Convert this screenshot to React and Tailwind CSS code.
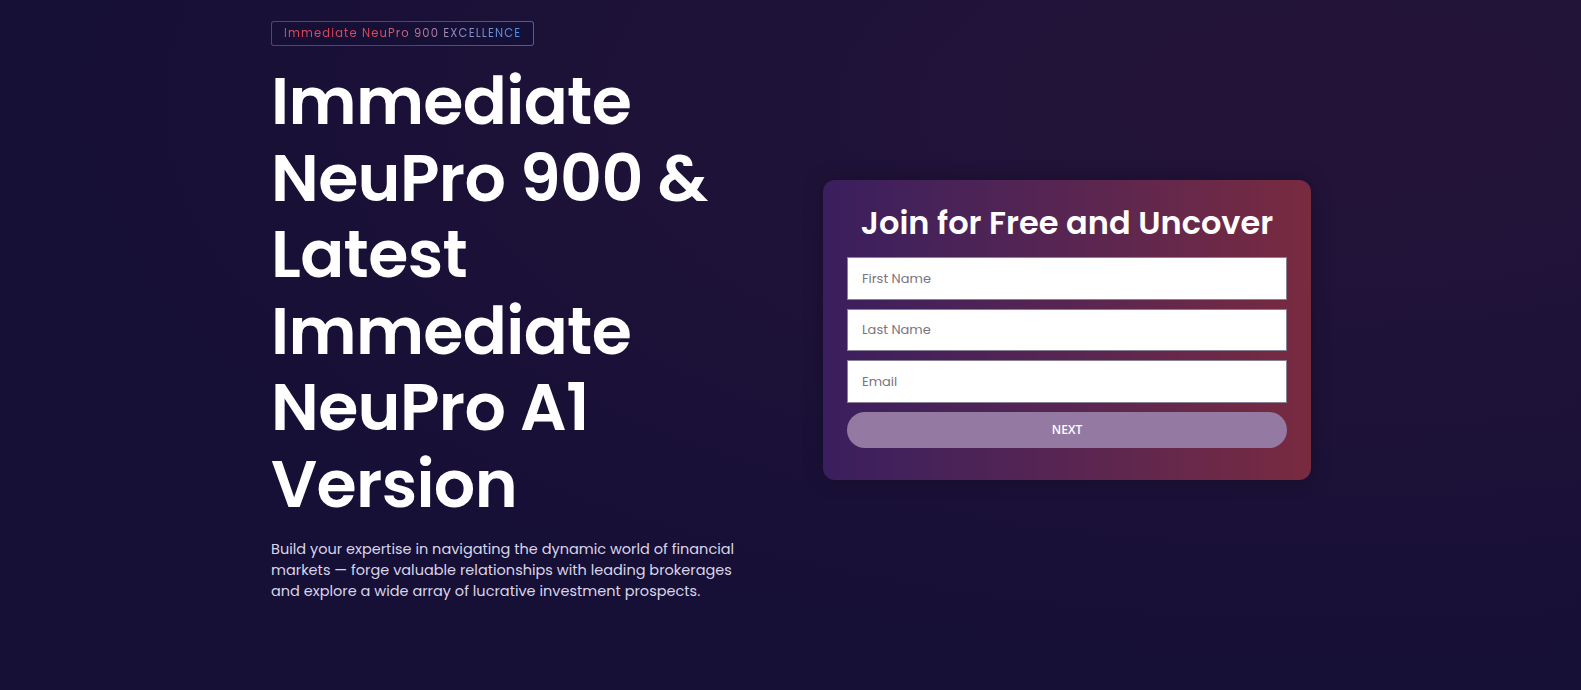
import React from "react";

export default function App() {
  return (
    <div
      className="min-h-screen w-full overflow-hidden bg-[#150f37] bg-[radial-gradient(ellipse_at_85%_15%,#241339_0%,#1e1238_35%,#160f36_70%)]"
      style={{ fontFamily: "Poppins, Inter, 'Noto Sans', sans-serif" }}
    >
      <div className="flex items-center pl-[271px] pt-[20px] pb-[90px]">
        <div className="w-[484px] shrink-0">
          <div className="inline-flex rounded-[3px] bg-gradient-to-r from-[#6a3a72] via-[#4c3f8c] to-[#3e62b0] p-px">
            <div className="flex h-[23px] items-center rounded-[2px] bg-[#161037] px-[12px] text-[11.5px] tracking-[0.1em]">
              <span className="bg-gradient-to-r from-[#dc4a5a] from-40% via-[#9c8db8] via-70% to-[#4a8ee8] bg-clip-text text-transparent">
                Immediate NeuPro 900 EXCELLENCE
              </span>
            </div>
          </div>
          <h1 className="mt-[18px] text-[65px] font-semibold leading-[76.5px] tracking-[-0.01em] text-white">
            Immediate NeuPro 900 &amp; Latest Immediate NeuPro A1 Version
          </h1>
          <p className="mt-[16px] w-[472px] text-[14.5px] leading-[21px] text-[#d9d5e8]">
            Build your expertise in navigating the dynamic world of financial markets — forge valuable relationships with leading brokerages and explore a wide array of lucrative investment prospects.
          </p>
        </div>

        <div className="mt-[38px] ml-[68px] w-[488px] shrink-0 rounded-[12px] bg-gradient-to-r from-[#3a1e5e] via-[#582552] to-[#792a3f] px-[24px] pt-[22px] pb-[32px] shadow-[0_0_20px_rgba(0,0,0,0.25)]">
          <h2 className="text-center text-[32px] font-semibold leading-[42px] text-white">
            Join for Free and Uncover
          </h2>
          <form className="mt-[13px] flex flex-col gap-[9px]" onSubmit={(e) => e.preventDefault()}>
            <input
              type="text"
              placeholder="First Name"
              className="h-[42.5px] w-full border border-[#8b8196] bg-white px-[14px] text-[13px] text-gray-800 placeholder-[#7a7480] outline-none"
            />
            <input
              type="text"
              placeholder="Last Name"
              className="h-[42.5px] w-full border border-[#8b8196] bg-white px-[14px] text-[13px] text-gray-800 placeholder-[#7a7480] outline-none"
            />
            <input
              type="email"
              placeholder="Email"
              className="h-[42.5px] w-full border border-[#8b8196] bg-white px-[14px] text-[13px] text-gray-800 placeholder-[#7a7480] outline-none"
            />
            <button
              type="submit"
              className="h-[36px] w-full rounded-full bg-[#947aa3] text-[12px] font-semibold text-white"
              style={{ fontFamily: "'Open Sans', 'Noto Sans', sans-serif" }}
            >
              NEXT
            </button>
          </form>
        </div>
      </div>
    </div>
  );
}
